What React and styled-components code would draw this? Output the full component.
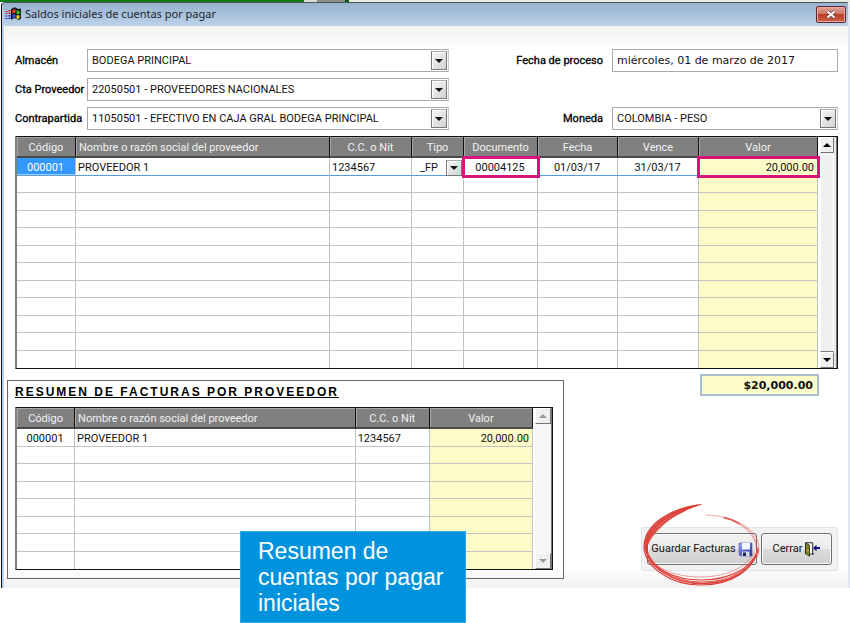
import React from "react";
import styled, { createGlobalStyle, css } from "styled-components";

const ui = 'Roboto, "Liberation Sans", sans-serif';
const caption = '"Noto Sans", "Open Sans", sans-serif';
const wide = '"DejaVu Sans", Verdana, sans-serif';

const GlobalStyle = createGlobalStyle`
  *, *::before, *::after { box-sizing: border-box; }
  body { margin: 0; background: #fff; font: 11px/16px ${ui}; color: #111; }
  button, input, select { font: inherit; color: inherit; margin: 0; }
`;

const Page = styled.div`
  position: relative;
  min-height: 100vh;
  background: #fff;
`;

const Backdrop = styled.div`
  height: 2px;
  background: linear-gradient(to right, #0b7a0f 304px, #d9ddd6 304px, #d9ddd6 317px, #8b8f8b 317px, #8b8f8b 345px, #0b5a12 345px, #0b5a12 349px, #e6ebe3 349px);
`;

const Dialog = styled.main`
  border-top: 1px solid #4c555c;
  border-left: 1px solid #0b0d12;
  border-right: 2px solid #dfe8f5;
  margin-left: 1px;
  padding-left: 1px;
  border-radius: 4px 4px 0 0;
  background: linear-gradient(to right, #b8d0ea 2px, #fff 2px);
`;

const TitleBar = styled.header`
  display: flex;
  align-items: center;
  gap: 4px;
  height: 23px;
  padding: 0 2px;
  background: linear-gradient(#98b2cd, #b9d1ea);
  border-bottom: 1px solid #c5d3e1;
`;

const Title = styled.h1`
  flex: 1;
  margin: 0;
  font: 400 11px/16px ${caption};
  color: #1a2530;
`;

const CloseButton = styled.button`
  display: grid;
  place-items: center;
  width: 30px;
  height: 17px;
  padding: 0;
  border: 1px solid #5c2a30;
  border-radius: 2px;
  box-shadow: inset 0 0 0 1px #e7a99f;
  background: linear-gradient(#e1a297 0, #cf7566 45%, #b73b25 46%, #cc6348 100%);
`;

const Client = styled.div`
  margin-left: 2px;
  padding: 23px 10px 9px 2px;
  background: linear-gradient(#f1f1f1 0, #fff 23px, #fff calc(100% - 22px), #f0f0f0 100%);
`;

const Form = styled.form`
  display: grid;
  grid-template-columns: 72px minmax(0, 362fr) 163px minmax(0, 226fr);
  row-gap: 6px;
  align-items: center;
  padding-left: 8px;
`;

const Label = styled.label`
  grid-column: ${(p) => (p.$end ? 3 : 1)};
  justify-self: ${(p) => (p.$end ? "end" : "start")};
  padding-right: ${(p) => (p.$end ? "9px" : "0")};
  white-space: nowrap;
  color: #000;
  -webkit-text-stroke: 0.3px #000;
`;

const Combo = styled.span`
  display: grid;
  grid-template-columns: minmax(0, 1fr);
  align-items: center;
  height: 23px;
  border: 1px solid #a8a8ae;
  border-right-color: #c8c8d4;
  background: #fff;
`;

const Select = styled.select`
  grid-area: 1 / 1;
  appearance: none;
  width: 100%;
  height: 100%;
  border: 0;
  padding: 0 20px 0 ${(p) => (p.$compact ? 8 : 4)}px;
  background: transparent;
`;

const ArrowBox = styled.span`
  grid-area: 1 / 1;
  justify-self: end;
  display: grid;
  place-items: center;
  width: 16px;
  height: ${(p) => (p.$compact ? 16 : 19)}px;
  margin-right: ${(p) => (p.$compact ? 0 : 1)}px;
  border: 1px solid #77777c;
  border-top-color: #a9a9ad;
  box-shadow: inset 1px 1px 0 #fff;
  background: linear-gradient(135deg, #f6f6f6, #d2d2d2);
  pointer-events: none;
`;

const DateInput = styled.input`
  width: 100%;
  height: 23px;
  border: 1px solid #a8a8ae;
  padding: 0 4px;
  background: #fff;
  font: 11px/16px ${wide};
`;

const GridFrame = styled.div`
  display: flex;
  border: 1px solid #111;
  border-left: 2px solid #808080;
  background: #fff;
  ${(p) => p.$main && css`margin: 6px 0 0 8px;`}
`;

const Table = styled.table`
  flex: 1;
  width: 0;
  table-layout: fixed;
  border-collapse: separate;
  border-spacing: 0;
`;

const Th = styled.th`
  height: 21px;
  padding: 2px 3px 0;
  overflow: hidden;
  white-space: nowrap;
  font-weight: 400;
  line-height: 17px;
  text-align: ${(p) => p.$align || "center"};
  color: #f2f2f2;
  background: #808080;
  border-right: 1px solid #111;
  border-bottom: 2px solid #4a4a4a;
  box-shadow: inset 1px 1px 0 #a6a6a6;
`;

const Row = styled.tr`
  height: 18px;
  &:nth-child(even) { height: 17px; }
`;

const Td = styled.td`
  padding: 2px 3px 0 2px;
  white-space: nowrap;
  line-height: 14px;
  text-align: ${(p) => p.$align || "left"};
  border-right: 1px solid #c0c0c0;
  border-bottom: 1px solid ${(p) => (p.$current ? "#5a9ddc" : "#c4c4c4")};
  ${(p) => p.$value && css`background: #fdfbc8;`}
  ${(p) => p.$selected && css`
    color: #fff;
    background: #3399ff;
    box-shadow: inset 0 -1px 0 #9fd0ff;
  `}
  ${(p) => p.$marked && css`
    position: relative;
    outline: 3px solid #d6147c;
    outline-offset: -1px;
  `}
  tr:last-child > & { border-bottom: 0; }
`;

const TypeCell = styled.span`
  display: grid;
  grid-template-columns: minmax(0, 1fr);
  align-items: center;
  height: 15px;
  margin: 0 -2px;
`;

const ScrollTrack = styled.div`
  display: flex;
  flex-direction: column;
  justify-content: space-between;
  width: 19px;
  padding-right: ${(p) => (p.$disabled ? 0 : 2)}px;
  border-left: 2px solid #fff;
  background: ${(p) => (p.$disabled ? "#f6f6f6" : "#e9e9e9")};
  border-right: 1px solid #777;
`;

const ScrollButton = styled.button`
  display: grid;
  place-items: center;
  width: 100%;
  height: 16px;
  padding: 0;
  border: 1px solid #fff;
  border-right-color: #777;
  border-bottom-color: #777;
  background: #f0f0f0;
  color: ${(p) => (p.disabled ? "#9a9a9a" : "#000")};
`;

const Thumb = styled.div`
  flex: 1;
  margin-top: 1px;
  border: 1px solid #fff;
  border-bottom-color: #777;
  background: #f0f0f0;
`;

const Lower = styled.div`
  display: grid;
  grid-template-columns: minmax(0, 557fr) minmax(0, 274fr);
  margin-top: 5px;
`;

const Summary = styled.section`
  margin-top: 6px;
  padding: 4px 10px 8px 7px;
  border: 1px solid #666;
`;

const SummaryTitle = styled.h2`
  margin: 0 0 7px;
  font: 700 12px/15px "Liberation Sans", Arial, sans-serif;
  letter-spacing: 2px;
  white-space: nowrap;
  text-decoration: underline;
  color: #000;
`;

const Side = styled.div`
  display: flex;
  flex-direction: column;
  justify-content: space-between;
  align-items: flex-end;
  padding-bottom: 8px;
`;

const Total = styled.input`
  width: 119px;
  height: 22px;
  margin-right: 19px;
  border: 2px solid #a9bdcf;
  padding: 0 4px;
  text-align: right;
  background: #fdfbc8;
  font: 700 11px/16px ${wide};
`;

const Actions = styled.div`
  position: relative;
  display: flex;
  gap: 4px;
  padding: 5px;
  border: 1px solid #dde5ec;
  border-radius: 2px;
  background: #f2f2f2;
`;

const ActionButton = styled.button`
  display: flex;
  align-items: center;
  justify-content: center;
  gap: 2px;
  width: ${(p) => (p.$wide ? 110 : 71)}px;
  height: 32px;
  padding: 0;
  border: 1px solid #707070;
  border-radius: 3px;
  box-shadow: inset 0 0 0 1px #fafafa;
  background: linear-gradient(#f2f2f2 0, #ebebeb 49%, #dcdcdc 50%, #cfcfcf 100%);
  white-space: nowrap;
`;

const Scribble = styled.svg`
  position: absolute;
  left: -2px;
  top: -25px;
  pointer-events: none;
`;

const Callout = styled.aside`
  position: absolute;
  left: 240px;
  top: 531px;
  width: 226px;
  padding: 6px 17px;
  border: 1px solid #35a5e4;
  background: #0093dd;
  color: #fff;
  font: 23px/26px "Liberation Sans", Arial, sans-serif;
`;

const Arrow = ({ up }) => (
  <svg width="8" height="4" viewBox="0 0 8 4" aria-hidden="true">
    <path d={up ? "M0 4 4 0l4 4z" : "M0 0h8L4 4z"} fill="currentColor" />
  </svg>
);

const FlagIcon = () => (
  <svg width="16" height="14" viewBox="0 0 16 14" aria-hidden="true">
    <path d="M6 2.500C8 0 11 0 12 1.200s2.500 1 3.800 0V12c-1.300 1-2.800 1-3.800 0s-4-1-6 1z" fill="#080808" />
    <path d="M7.300 3.400c1-1.300 2.300-1.400 3.300-.8v3.800c-1-.6-2.300-.5-3.300.5z" fill="#f0401c" />
    <path d="M11.500 3.200c1 .6 2 .6 3 .1V7c-1 .5-2 .5-3-.1z" fill="#3dc41e" />
    <path d="M7.300 8c1-1 2.300-1.200 3.300-.6v3.500c-1-.5-2.300-.3-3.300.6z" fill="#2b4fe0" />
    <path d="M11.500 8c1 .6 2 .6 3 .1v3.400c-1 .5-2 .5-3-.1z" fill="#f4d41c" />
    <path d="M3.500 3h2v1.500h-2zM3.500 5.500h2V7h-2zM.5 4h2v1h-2zM.5 6h2v1h-2z" fill="#c8281c" />
    <path d="M3.500 8h2v1.500h-2zM3.500 10.500h2V12h-2zM.5 8.500h2v1h-2zM.5 11h2v1h-2z" fill="#1c2fb8" />
  </svg>
);

const CloseIcon = () => (
  <svg width="12" height="9" viewBox="0 0 12 9" aria-hidden="true">
    <path d="M2.500 1.500 9.500 7.500M9.500 1.500 2.500 7.500" stroke="#6b3038" strokeWidth="3.600" />
    <path d="M2.500 1.500 9.500 7.500M9.500 1.500 2.500 7.500" stroke="#fff" strokeWidth="2.200" />
  </svg>
);

const DiskIcon = () => (
  <svg width="15" height="15" viewBox="0 0 15 15" aria-hidden="true">
    <defs>
      <linearGradient id="disk" x1="0" y1="0" x2="1" y2="1">
        <stop offset="0" stopColor="#a6abf0" />
        <stop offset=".5" stopColor="#5a63cf" />
        <stop offset="1" stopColor="#232b96" />
      </linearGradient>
    </defs>
    <path d="M1 1h13v13H2.500L1 12.500z" fill="url(#disk)" stroke="#4c54b5" strokeWidth=".6" />
    <path d="M4 1h8v6.500H4z" fill="#f4f7fd" />
    <path d="M4 9.500h7.500V14H4z" fill="#d6dbe6" />
    <path d="M5 10.500h3V14H5z" fill="#20254f" />
  </svg>
);

const ExitIcon = () => (
  <svg width="16" height="15" viewBox="0 0 16 15" aria-hidden="true">
    <path d="M1.500 12V.8h7.200V12" fill="#fff" stroke="#222" />
    <path d="M1.500 1 5.500 3v11.300L1.500 11.500z" fill="#8a8420" stroke="#26240a" strokeWidth=".8" />
    <path d="M4 8v1.200" stroke="#f5ef70" />
    <path d="M6 12h4" stroke="#222" />
    <path d="M9 6l3.500-3.300v2.200H16v2.200h-3.500v2.200z" fill="#11118c" />
  </svg>
);

const RedLoop = () => (
  <Scribble width="122" height="86" viewBox="0 0 122 86" fill="none" stroke="#dd403a" strokeLinecap="round" aria-hidden="true">
    <path d="M61 1.500C34 4 7 18 4 42c0 3 .5 6 1.500 8C9 33 27 13 61 1.500z" fill="#dd403a" fillOpacity=".8" stroke="none" />
    <path d="M61 1.500C32 5 5 20 4 43c0 20 25 39 57 39 31 0 53-15 57-37" strokeWidth="1.200" />
    <path d="M57 2.500C28 9 6 25 6 44c0 19 27 36.500 56 36.500 29 0 50-13 56-33" strokeWidth="1.500" />
    <path d="M51 5C23 13 6 27 7 45c2 18 27 34 54 34 28 0 47-11 55-28" strokeWidth=".9" />
    <path d="M46 7C20 18 4 34 7 50c6 16 28 27 54 27 25 0 44-9 53-22" strokeWidth="1.100" />
    <path d="M7 52c6 12 27 22 53 22 26 0 46-9 54-24" strokeWidth=".6" opacity=".8" />
    <path d="M66 12c31 1 53 15 53 34 0 3-.5 5-1.500 8M84 15c20 5 34 16 33 33M92 18c15 6 25 16 24 29" strokeWidth=".7" opacity=".65" />
    <path d="M84 14.500c5 1 11 3.500 15 6" strokeWidth="1.400" opacity=".8" />
  </Scribble>
);

const ComboField = ({ id, value }) => (
  <Combo>
    <Select id={id} defaultValue={value}>
      <option>{value}</option>
    </Select>
    <ArrowBox><Arrow /></ArrowBox>
  </Combo>
);

const ScrollBar = ({ disabled }) => (
  <ScrollTrack $disabled={disabled}>
    <ScrollButton type="button" disabled={disabled} aria-label="Subir"><Arrow up /></ScrollButton>
    {!disabled && <Thumb />}
    <ScrollButton type="button" disabled={disabled} aria-label="Bajar"><Arrow /></ScrollButton>
  </ScrollTrack>
);

const invoiceColumns = [
  { label: "Código", width: 59, align: "center", value: "000001", selected: true },
  { label: "Nombre o razón social del proveedor", width: 254, headAlign: "left", value: "PROVEEDOR 1" },
  { label: "C.C. o Nit", width: 82, value: "1234567" },
  { label: "Tipo", width: 52, value: "_FP", combo: true },
  { label: "Documento", width: 74, align: "center", value: "00004125", marked: true },
  { label: "Fecha", width: 80, align: "center", value: "01/03/17" },
  { label: "Vence", width: 81, align: "center", value: "31/03/17" },
  { label: "Valor", width: 119, align: "right", value: "20,000.00", amount: true, marked: true },
];

const summaryColumns = [
  { label: "Código", width: 58, align: "center", value: "000001" },
  { label: "Nombre o razón social del proveedor", width: 280, headAlign: "left", value: "PROVEEDOR 1" },
  { label: "C.C. o Nit", width: 74, value: "1234567" },
  { label: "Valor", width: 103, align: "right", value: "20,000.00", amount: true },
];

const Col = styled.col`
  width: ${(p) => p.$share}%;
`;

const DataGrid = ({ columns, rows, main }) => {
  const total = columns.reduce((sum, c) => sum + c.width, 0);
  return (
    <GridFrame $main={main}>
      <Table>
        <colgroup>
          {columns.map((c) => <Col key={c.label} $share={(c.width / total) * 100} />)}
        </colgroup>
        <thead>
          <tr>{columns.map((c) => <Th key={c.label} scope="col" $align={c.headAlign}>{c.label}</Th>)}</tr>
        </thead>
        <tbody>
          {Array.from({ length: rows }, (_, r) => (
            <Row key={r}>
              {columns.map((c) => (
                <Td
                  key={c.label}
                  $align={c.align}
                  $value={c.amount}
                  $current={main && r === 0}
                  $selected={main && r === 0 && c.selected}
                  $marked={r === 0 && c.marked}
                >
                  {r === 0 && (c.combo ? (
                    <TypeCell>
                      <Select aria-label={c.label} defaultValue={c.value} $compact>
                        <option>{c.value}</option>
                      </Select>
                      <ArrowBox $compact><Arrow /></ArrowBox>
                    </TypeCell>
                  ) : c.value)}
                </Td>
              ))}
            </Row>
          ))}
        </tbody>
      </Table>
      <ScrollBar disabled={!main} />
    </GridFrame>
  );
};

export default function App() {
  return (
    <Page>
      <GlobalStyle />
      <Backdrop />
      <Dialog>
        <TitleBar>
          <FlagIcon />
          <Title>Saldos iniciales de cuentas por pagar</Title>
          <CloseButton type="button" aria-label="Cerrar ventana"><CloseIcon /></CloseButton>
        </TitleBar>
        <Client>
          <Form>
            <Label htmlFor="almacen">Almacén</Label>
            <ComboField id="almacen" value="BODEGA PRINCIPAL" />
            <Label htmlFor="fecha" $end>Fecha de proceso</Label>
            <DateInput id="fecha" defaultValue="miércoles, 01 de marzo de 2017" />
            <Label htmlFor="proveedor">Cta Proveedor</Label>
            <ComboField id="proveedor" value="22050501 - PROVEEDORES NACIONALES" />
            <Label htmlFor="contrapartida">Contrapartida</Label>
            <ComboField id="contrapartida" value="11050501 - EFECTIVO EN CAJA GRAL BODEGA PRINCIPAL" />
            <Label htmlFor="moneda" $end>Moneda</Label>
            <ComboField id="moneda" value="COLOMBIA - PESO" />
          </Form>
          <DataGrid columns={invoiceColumns} rows={12} main />
          <Lower>
            <Summary>
              <SummaryTitle>RESUMEN DE FACTURAS POR PROVEEDOR</SummaryTitle>
              <DataGrid columns={summaryColumns} rows={8} />
            </Summary>
            <Side>
              <Total readOnly aria-label="Total" value="$20,000.00" />
              <Actions>
                <ActionButton type="button" $wide>Guardar Facturas<DiskIcon /></ActionButton>
                <ActionButton type="button">Cerrar<ExitIcon /></ActionButton>
                <RedLoop />
              </Actions>
            </Side>
          </Lower>
        </Client>
      </Dialog>
      <Callout>Resumen de cuentas por pagar iniciales</Callout>
    </Page>
  );
}
